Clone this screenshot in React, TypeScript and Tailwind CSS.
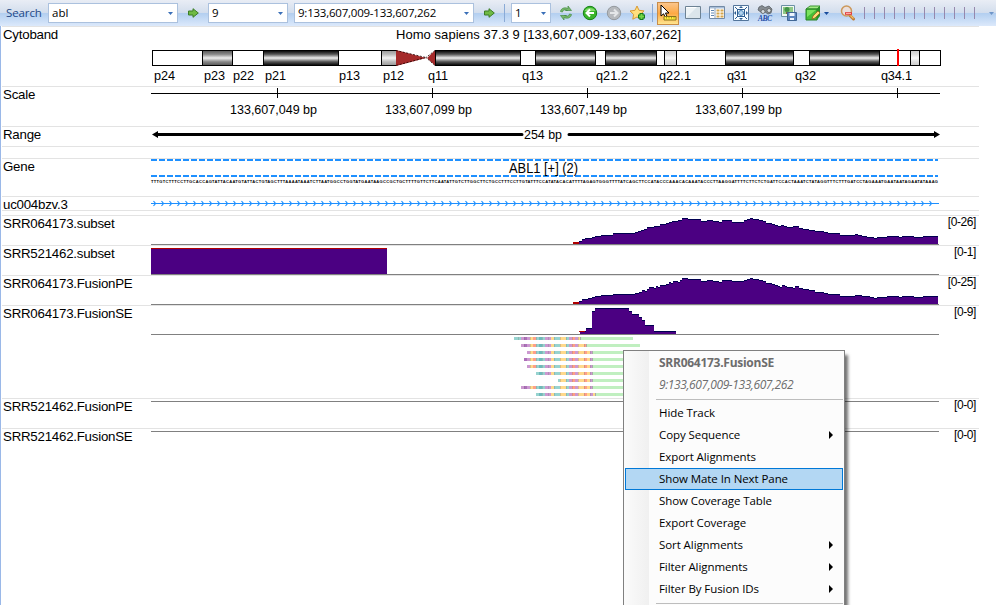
import React from "react";

type Step = [number, number];

const ARIAL = "font-['Liberation_Sans',Arial,sans-serif]";

/* ---------- Track data ---------- */

const subsetCoverage: Step[] = [
  [579, 3], [582, 5], [585, 6], [592, 7], [595, 8], [601, 9], [613, 11], [635, 12], [638, 13], [641, 14],
  [644, 15], [647, 17], [654, 18], [660, 20], [666, 21], [669, 22], [672, 23], [678, 24], [682, 26], [688, 25],
  [701, 23], [707, 24], [713, 23], [719, 22], [722, 24], [732, 22], [744, 24], [747, 25], [750, 26], [753, 25],
  [759, 24], [763, 23], [766, 21], [772, 20], [775, 19], [778, 18], [781, 19], [784, 18], [787, 17], [793, 18],
  [799, 16], [803, 15], [809, 14], [815, 13], [824, 12], [828, 11], [840, 9], [855, 10], [858, 9], [862, 8],
  [867, 7], [874, 6], [877, 7], [887, 8], [899, 7], [902, 8], [914, 7], [923, 8], [938, 0],
];

const fusionPeCoverage: Step[] = [
  [579, 3], [582, 5], [588, 6], [592, 7], [595, 8], [601, 9], [613, 10], [635, 11], [639, 12], [642, 14],
  [645, 13], [647, 15], [649, 17], [654, 16], [656, 18], [658, 17], [660, 19], [666, 20], [669, 22], [671, 21],
  [673, 23], [678, 22], [680, 24], [682, 26], [688, 25], [701, 23], [707, 24], [713, 23], [719, 22], [722, 24],
  [732, 23], [744, 24], [747, 25], [750, 26], [753, 25], [759, 24], [763, 23], [766, 21], [772, 20], [775, 19],
  [778, 18], [780, 17], [782, 19], [785, 18], [787, 17], [793, 16], [795, 18], [799, 16], [803, 15], [809, 14],
  [815, 12], [824, 11], [828, 10], [840, 8], [855, 9], [862, 8], [870, 7], [874, 6], [877, 7], [887, 8],
  [899, 7], [902, 8], [914, 7], [923, 8], [938, 0],
];

const fusionSeCoverage: Step[] = [
  [580, 3], [586, 6], [592, 23], [595, 26], [629, 23], [632, 20], [639, 17], [642, 14], [645, 9], [654, 3], [676, 0],
];

const sequence =
  "TTTGTCTTTCCTTGCACCAGTATTACAATGTATTACTGTAGCTTTAAAATAAATCTTAATGGCCTGGTATGAATAAGCCGCTGCTTTTGTTCTTCAATATTGTCTTGGCTTCTGCCTTTCCTTGTATTTCCATATACACATTTTAGAGTGGGTTTTATCAGCTTCCATACCCAAACACAAATACCCTTAAGGATTTTCTTCTCTGATTCCACTAAATCTATAGGTTTCTTTGATCCTAGAAATGAATAATAGAATATAAAG";

const T = "#97d3cf";
const TD = "#6fb9ba";
const P = "#cc99d0";
const PD = "#ad70ba";
const Y = "#ffd98c";
const R = "#ff9f88";

/* One colour per 3px base column, starting at x = 512. */
const baseColors = [
  T, T, T, P, PD, P, Y, R, T, TD, T, P, P, Y, T, T, Y, Y, T, P, R, P, Y, Y, R, Y, P, Y,
];

const reads: { start: number; split: number; end: number }[] = [
  { start: 514, split: 581, end: 633 },
  { start: 521, split: 587, end: 640 },
  { start: 527, split: 593, end: 644 },
  { start: 524, split: 593, end: 644 },
  { start: 527, split: 593, end: 644 },
  { start: 536, split: 593, end: 644 },
  { start: 558, split: 593, end: 644 },
  { start: 521, split: 593, end: 644 },
  { start: 536, split: 596, end: 644 },
];

type Band = { x: number; w: number; fill: string };
const bands: Band[] = [
  { x: 152, w: 50, fill: "#fff" },
  { x: 202, w: 30, fill: "url(#mid)" },
  { x: 232, w: 31, fill: "#fff" },
  { x: 263, w: 75, fill: "url(#dark)" },
  { x: 338, w: 43, fill: "#fff" },
  { x: 381, w: 15, fill: "url(#soft)" },
  { x: 435, w: 85, fill: "url(#dark)" },
  { x: 520, w: 15, fill: "#fff" },
  { x: 535, w: 60, fill: "url(#dark)" },
  { x: 595, w: 10, fill: "#fff" },
  { x: 605, w: 51, fill: "url(#dark)" },
  { x: 656, w: 8, fill: "#fff" },
  { x: 664, w: 12, fill: "url(#pale)" },
  { x: 676, w: 49, fill: "#fff" },
  { x: 725, w: 68, fill: "url(#dark)" },
  { x: 793, w: 16, fill: "#fff" },
  { x: 809, w: 70, fill: "url(#dark)" },
  { x: 879, w: 31, fill: "#fff" },
  { x: 910, w: 9, fill: "url(#pale)" },
  { x: 919, w: 21, fill: "#fff" },
];

const bandLabels: [string, number, number][] = [
  ["p24", 154, 21], ["p23", 204, 21], ["p22", 233, 21], ["p21", 265, 21], ["p13", 339, 21], ["p12", 383, 21],
  ["q11", 428, 20], ["q13", 522, 21], ["q21.2", 596, 32], ["q22.1", 659, 32], ["q31", 727, 20], ["q32", 795, 21],
  ["q34.1", 881, 31],
];

/* ---------- Track pieces ---------- */

function Row({ top, height, label, range, children }: {
  top: number; height: number; label?: string; range?: string; children?: React.ReactNode;
}) {
  return (
    <div className="flex w-full shrink-0 border-t border-[#e3e3e3]" style={{ height }}>
      <div className="w-[148px] shrink-0 pl-px text-[13.3px] leading-[16px] tracking-[-0.24px] whitespace-nowrap">{label}</div>
      <svg className="block shrink-0" width={792} height={height - 1} viewBox={`150 ${top + 1} 792 ${height - 1}`}>
        {children}
      </svg>
      <div className="flex-1 pr-[3px] text-right text-[12px] leading-[13px] tracking-[-0.4px] whitespace-nowrap">{range}</div>
    </div>
  );
}

function Coverage({ steps, base }: { steps: Step[]; base: number }) {
  return (
    <g shapeRendering="crispEdges">
      {steps.slice(0, -1).map(([x, h], i) => (
        <g key={x}>
          <rect x={x} y={base - h} width={steps[i + 1][0] - x} height={h} fill="#4b0082" />
          <rect x={x} y={base - h} width={steps[i + 1][0] - x} height={1} fill="#000050" />
        </g>
      ))}
    </g>
  );
}

function Baseline({ y }: { y: number }) {
  return <rect x={151} y={y} width={788} height={1} fill="#808080" />;
}

function Gradient({ id, stops }: { id: string; stops: string[] }) {
  return (
    <linearGradient id={id} x1="0" y1="0" x2="0" y2="1">
      {stops.map((c, i) => <stop key={i} offset={i / (stops.length - 1)} stopColor={c} />)}
    </linearGradient>
  );
}

function Cytoband() {
  return (
    <>
      <defs>
        <Gradient id="dark" stops={["#000", "#555", "#eee", "#555", "#000"]} />
        <Gradient id="mid" stops={["#555", "#888", "#eee", "#888", "#555"]} />
        <Gradient id="soft" stops={["#999", "#bbb", "#f4f4f4", "#bbb", "#999"]} />
        <Gradient id="pale" stops={["#ccc", "#ddd", "#fafafa", "#ddd", "#ccc"]} />
      </defs>
      <text x={396} y={39} fontSize={13} textLength={285}>Homo sapiens 37.3 9 [133,607,009-133,607,262]</text>
      <g shapeRendering="crispEdges">
        {bands.map((b) => (
          <rect key={b.x} x={b.x + 0.5} y={50.5} width={b.w} height={15} fill={b.fill} stroke="#000" />
        ))}
      </g>
      <path d="M396 50L426 58L396 66ZM435 50.5L427 58L435 65.5Z" fill="#a52a2a" />
      <path d="M396 50.5L426 57.5L396 65.5M435 50.5L426 57.5L435 65.5" fill="none" stroke="#200" strokeDasharray="2 1.5" strokeWidth=".8" />
      <rect x={897} y={49} width={2} height={17} fill="#f00" />
      {bandLabels.map(([name, x, w]) => (
        <text key={x} x={x} y={80} fontSize={12.7} textLength={w}>{name}</text>
      ))}
    </>
  );
}

function ScaleAxis() {
  return (
    <>
      <rect x={151} y={93} width={789} height={1} />
      {[277, 432, 587, 742, 897].map((x) => <rect key={x} x={x} y={88} width={1} height={10} />)}
      {[49, 99, 149, 199].map((n, i) => (
        <text key={n} x={230 + i * 155} y={114} fontSize={13} textLength={87} lengthAdjust="spacingAndGlyphs">
          {`133,607,${String(n).padStart(3, "0")} bp`}
        </text>
      ))}
    </>
  );
}

function GeneTrack() {
  return (
    <>
      <path d="M151 160H938M151 176H938" stroke="#1e90ff" strokeWidth={2} strokeDasharray="6 2" />
      <text x={509} y={173} fontSize={14} textLength={69} lengthAdjust="spacingAndGlyphs">ABL1 [+] (2)</text>
      <text x={151} y={183} fontSize={4} fontWeight={700} textLength={787} lengthAdjust="spacing">{sequence}</text>
    </>
  );
}

function Transcript() {
  const arrows = Array.from({ length: 98 }, (_, i) => `M${153.5 + i * 8} 201l2 2.5l-2 2.5`).join("");
  return (
    <>
      <path d="M151 203.5H939" stroke="#1e90ff" />
      <path d={arrows} fill="none" stroke="#1e90ff" strokeWidth={1.2} />
    </>
  );
}

function Reads() {
  return (
    <g shapeRendering="crispEdges">
      {reads.map((r, i) => {
        const y = 337 + i * 7;
        return (
          <g key={i}>
            {baseColors.map((c, n) => {
              const x = 512 + n * 3;
              const from = Math.max(x, r.start);
              const to = Math.min(x + 3, r.split);
              return to > from ? <rect key={n} x={from} y={y} width={to - from} height={3} fill={c} /> : null;
            })}
            {Array.from({ length: 14 }, (_, n) => 518 + n * 6).filter((x) => x > r.start && x < r.split).map((x) => (
              <rect key={x} x={x} y={y} width={1} height={3} fill="#777" opacity={0.3} />
            ))}
            <rect x={r.split} y={y} width={r.end - r.split} height={3} fill="#c0efc0" />
            <rect x={r.split - 1} y={y} width={1} height={3} fill="#aaa" />
          </g>
        );
      })}
    </g>
  );
}

/* ---------- Toolbar ---------- */

function Combo({ value, className }: { value: string; className: string }) {
  return (
    <div className={`flex h-5 shrink-0 items-center justify-between border border-[#abc1de] bg-white pr-1 pl-[3px] ${className}`}>
      <span className="text-[11.5px] leading-4 whitespace-nowrap">{value}</span>
      <svg width="5" height="3" viewBox="0 0 5 3"><path d="M0 0h5L2.5 3z" fill="#3a6fb8" /></svg>
    </div>
  );
}

function GoArrow({ className }: { className: string }) {
  return (
    <svg className={`shrink-0 ${className}`} width="11" height="10" viewBox="0 0 11 10">
      <path d="M.5 3h4.500V.7L10.300 5 5 9.300V7H.5z" fill="#6fba45" stroke="#3c7d27" />
    </svg>
  );
}

function Separator({ className }: { className: string }) {
  return <div className={`h-[18px] w-px shrink-0 bg-[#8aaad6] ${className}`} />;
}

function Icon({ className, children }: { className?: string; children: React.ReactNode }) {
  return <svg className={`shrink-0 ${className ?? ""}`} width="16" height="16" viewBox="0 0 16 16" fill="none">{children}</svg>;
}

function Toolbar() {
  return (
    <div className="flex h-[26px] w-full shrink-0 items-center bg-[linear-gradient(#e9edf5_0,#d3deed_48%,#b3cff0_52%,#dce9fb_100%)] font-['Open_Sans','Noto_Sans',sans-serif]">
      <span className="w-[43px] shrink-0 pl-[6px] text-[11.5px] tracking-[-0.1px] text-[#1e4886]">Search</span>
      <Combo value="abl" className="ml-[5px] w-[130px]" />
      <GoArrow className="ml-[10px]" />
      <Combo value="9" className="ml-[9px] w-[80px]" />
      <Combo value="9:133,607,009-133,607,262" className="ml-[6px] w-[180px] tracking-[-0.22px]" />
      <GoArrow className="ml-[10px]" />
      <Separator className="ml-[9px]" />
      <Combo value="1" className="ml-[6px] w-[40px]" />
      <Icon className="ml-[7px]">
        <path d="M2.500 6.500C3 3 7 2 10 3.500V1l3.500 4.500H7.500L9.500 5.500C7 4.500 5 4.500 4.500 7z" fill="#79b86c" stroke="#438b43" strokeWidth=".7" />
        <path d="M13.500 9.500C13 13 9 14 6 12.500V15L2.500 10.500h6L6.500 10.500C9 11.500 11 11.500 11.500 9z" fill="#79b86c" stroke="#438b43" strokeWidth=".7" />
      </Icon>
      <Icon className="ml-2">
        <circle cx="8" cy="8" r="6.700" fill="#3ab52b" stroke="#178217" />
        <path d="M2.500 6a6 5 0 0 1 11 0z" fill="#83dc6c" />
        <path d="M12 8H5M8 4.500L4.500 8 8 11.500" stroke="#fff" strokeWidth="2" />
      </Icon>
      <Icon className="ml-2">
        <circle cx="8" cy="8" r="6.700" fill="#b6b9bd" stroke="#94999e" />
        <path d="M4 8h7M8 4.500L11.500 8 8 11.500" stroke="#e5e7e9" strokeWidth="2" />
      </Icon>
      <Icon className="ml-2">
        <path d="M7 1l2 4.300 5 .6-3.500 3.500.8 4.800L7 12l-4.200 2.200.8-4.800L0 6l5-.7z" fill="#ffdf7e" stroke="#d99a35" />
        <path d="M11.500 8v7M8 11.500h7" stroke="#137b1b" strokeWidth="4" />
        <path d="M11.500 9v5M9 11.500h5" stroke="#75d645" strokeWidth="2" />
      </Icon>
      <Separator className="ml-[6px]" />
      <div className="ml-1 flex h-[23px] w-[22px] shrink-0 items-center justify-center border border-[#c88c49] bg-[linear-gradient(#fbc58b,#fda944_50%,#ffe58f)]">
        <svg className="shrink-0" width="18" height="18" viewBox="0 0 18 18">
          <path d="M2 1v11l2.600-2.200L6.500 14l1.800-.9L6.500 9H10z" fill="#fff" stroke="#000" />
          <path d="M5 12.500h12v3.500H5z" fill="#ffef3a" stroke="#89741c" />
          <path d="M7.500 12.500v2M10 12.500v2M12.500 12.500v2M15 12.500v2" stroke="#89741c" strokeWidth=".7" />
        </svg>
      </div>
      <Icon className="ml-[6px]">
        <path d="M.5 1.500h15v12H.5z" fill="#edf3f6" stroke="#6d8294" /><path d="M1 2.500h14" stroke="#fff" />
        <path d="M1 13L12 2h3v11z" fill="#dbe5eb" />
      </Icon>
      <Icon className="ml-2">
        <path d="M.5 1.500h15v12H.5z" fill="#fff" stroke="#728aa6" /><path d="M1 2h14v1.500H1z" fill="#a8bed8" />
        <path d="M2 5.500h3M2 8h3M2 10.500h3" stroke="#6187b2" /><path d="M6 3v10" stroke="#8da2bb" />
        <path d="M7.500 5.500h3M11.500 5.500h3M7.500 8.500h3M11.500 8.500h3M7.500 11.500h3M11.500 11.500h3" stroke="#d5a64c" strokeWidth="2" />
      </Icon>
      <Icon className="ml-2">
        <path d="M.5.5h15v15H.5z" fill="#f8fcff" stroke="#53759b" />
        <path d="M4.500 4.500h7v7h-7zM2 2l3 3M14 2l-3 3M2 14l3-3M14 14l-3-3" stroke="#2d5d91" />
        <path d="M8 1l2 2H6zM8 15l2-2H6zM1 8l2-2v4zM15 8l-2-2v4z" fill="#2d5d91" />
        <circle cx="8" cy="8" r="2.500" fill="#b2d3ef" stroke="#5086b8" />
      </Icon>
      <Icon className="ml-2">
        <path d="M2 2l3-1.500 3 2 4-1.500 3 3-1 4-3 1-3-2-3 1-4-3z" fill="#858b90" stroke="#50565b" strokeWidth=".7" />
        <circle cx="6" cy="6.500" r="2" fill="#d6dce0" stroke="#555" strokeWidth=".7" /><circle cx="12" cy="5.500" r="2" fill="#d6dce0" stroke="#555" strokeWidth=".7" />
        <text x="1" y="15.500" fontSize="7.500" fontWeight="700" fontStyle="italic" textLength="14" fill="#234ca8" className="font-['Liberation_Serif',serif]">ABC</text>
      </Icon>
      <Icon className="ml-2">
        <path d="M.5.5h13v11H.5z" fill="#f2f8f1" stroke="#6b91a5" /><path d="M2 2h10v7H2z" fill="#8fc987" />
        <circle cx="6" cy="4.500" r="2.500" fill="#429448" /><path d="M5 7h2v2H5z" fill="#846339" />
        <path d="M6.500 7.500h9v8h-9z" fill="#5d86bf" stroke="#416795" /><path d="M8.500 8h5v3h-5zM9 13h4v2H9z" fill="#edf5ff" />
      </Icon>
      <Icon className="ml-2">
        <path d="M1 4l4-3h10l-3 3z" fill="#a2ec84" stroke="#3e9636" /><path d="M1 4h11v11H1z" fill="#45bd37" stroke="#298126" />
        <path d="M12 4l3-3v10l-3 4z" fill="#279028" /><path d="M2 5h9L2 12z" fill="#7be25f" />
        <path d="M7 14l1-3 5-5 2 2-5 5z" fill="#ffdc78" stroke="#92631f" strokeWidth=".8" />
      </Icon>
      <svg className="ml-[3px] shrink-0" width="5" height="3" viewBox="0 0 5 3"><path d="M0 0h5L2.500 3z" fill="#174b9c" /></svg>
      <Icon className="ml-[11px]">
        <path d="M10 10.500l3.500 3.500" stroke="#bd7c35" strokeWidth="3" strokeLinecap="round" /><path d="M10.500 10.500l3 3" stroke="#f3bd67" strokeWidth="1.300" />
        <circle cx="6.500" cy="6" r="5" fill="#eadfdc" stroke="#cc985b" strokeWidth="1.500" />
        <path d="M5 8.500h7" stroke="#e23b3b" strokeWidth="2.600" /><path d="M6 8.500h5" stroke="#ffa9a1" />
      </Icon>
      <div className="ml-2 flex w-[111px] shrink-0 justify-between">
        {Array.from({ length: 12 }, (_, i) => <span key={i} className="h-3 w-px bg-[#9688ac]" />)}
      </div>
      <svg className="ml-[14px] shrink-0" width="5" height="3" viewBox="0 0 5 3"><path d="M0 0h5L2.500 3z" fill="#6f96c9" /></svg>
    </div>
  );
}

/* ---------- Context menu ---------- */

const menuItems: { label: string; submenu?: boolean; active?: boolean }[] = [
  { label: "Hide Track" },
  { label: "Copy Sequence", submenu: true },
  { label: "Export Alignments" },
  { label: "Show Mate In Next Pane", active: true },
  { label: "Show Coverage Table" },
  { label: "Export Coverage" },
  { label: "Sort Alignments", submenu: true },
  { label: "Filter Alignments", submenu: true },
  { label: "Filter By Fusion IDs", submenu: true },
];

function ContextMenu() {
  return (
    <div className="absolute top-[350px] left-[623px] h-[270px] w-[222px] border border-[#808080] bg-[#fcfcfc] bg-[linear-gradient(90deg,#fbfbfb,#f0f0f0)] bg-[length:25px_100%] bg-no-repeat px-px pt-px font-['Open_Sans','Noto_Sans',sans-serif] text-[11.5px] tracking-[-0.08px] shadow-[4px_4px_3px_-1px_rgba(0,0,0,0.55)]">
      <div className="flex h-[22px] items-center pl-[34px] text-[12px] font-bold tracking-[-0.27px] text-[#6d6d6d]">SRR064173.FusionSE</div>
      <div className="flex h-[22px] items-center pl-[34px] text-[12px] tracking-[-0.4px] text-[#6d6d6d] italic">9:133,607,009-133,607,262</div>
      <div className="mt-[3px] mb-[2px] ml-[31px] h-px bg-[#bdbdbd]" />
      {menuItems.map((m) => (
        <div
          key={m.label}
          className={`flex h-[22px] items-center justify-between border pr-[9px] pl-[33px] ${m.active ? "border-[#0078d7] bg-[#b3d7f3]" : "border-transparent"}`}
        >
          <span className="whitespace-nowrap">{m.label}</span>
          {m.submenu && <svg width="4" height="8" viewBox="0 0 4 8"><path d="M0 0l4 4-4 4z" /></svg>}
        </div>
      ))}
      <div className="mt-[3px] ml-[31px] h-px bg-[#bdbdbd]" />
    </div>
  );
}

export default function App() {
  return (
    <div className={`relative flex h-[605px] w-[996px] flex-col overflow-hidden bg-white text-black ${ARIAL}`}>
      <Toolbar />
      <div className="flex flex-1 border-l border-[#9ab8e8] pl-px">
        <div className="flex w-[977px] flex-col">
          <Row top={26} height={60} label="Cytoband"><Cytoband /></Row>
          <Row top={86} height={40} label="Scale"><ScaleAxis /></Row>
          <Row top={126} height={20} label="Range">
            <path d="M158 134.500H522M569 134.500H934" stroke="#000" strokeWidth={3} strokeLinecap="round" />
            <path d="M152 134.500l6-3.500v7zM940 134.500l-6-3.500v7z" />
            <text x={524} y={139} fontSize={12.7} textLength={38} lengthAdjust="spacingAndGlyphs">254 bp</text>
          </Row>
          <Row top={146} height={12} />
          <Row top={158} height={38} label="Gene"><GeneTrack /></Row>
          <Row top={196} height={14} label="uc004bzv.3"><Transcript /></Row>
          <Row top={210} height={5} />
          <Row top={215} height={30} label="SRR064173.subset" range="[0-26]">
            <Coverage steps={subsetCoverage} base={244} />
            <rect x={573} y={242} width={6} height={2} fill="#b00000" />
            <Baseline y={244} />
          </Row>
          <Row top={245} height={30} label="SRR521462.subset" range="[0-1]">
            <rect x={151} y={248} width={236} height={26} fill="#4b0082" />
            <rect x={151} y={248} width={236} height={1} fill="#b00000" />
            <Baseline y={274} />
          </Row>
          <Row top={275} height={30} label="SRR064173.FusionPE" range="[0-25]">
            <Coverage steps={fusionPeCoverage} base={304} />
            <rect x={573} y={302} width={6} height={2} fill="#b00000" />
            <Baseline y={304} />
          </Row>
          <Row top={305} height={93} label="SRR064173.FusionSE" range="[0-9]">
            <Coverage steps={fusionSeCoverage} base={334} />
            <rect x={579} y={331} width={6} height={1} fill="#b00000" />
            <Baseline y={334} />
            <Reads />
          </Row>
          <Row top={398} height={30} label="SRR521462.FusionPE" range="[0-0]"><Baseline y={401} /></Row>
          <Row top={428} height={30} label="SRR521462.FusionSE" range="[0-0]"><Baseline y={431} /></Row>
        </div>
      </div>
      <ContextMenu />
    </div>
  );
}
